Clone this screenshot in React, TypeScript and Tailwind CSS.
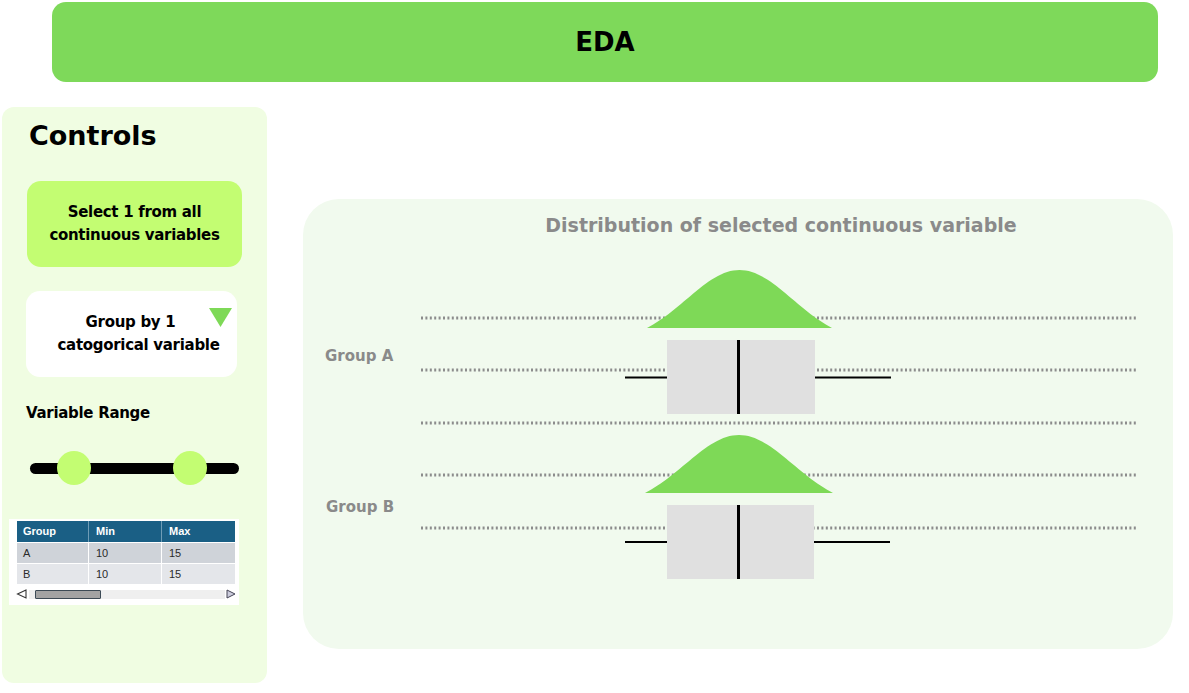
import React from "react";

function densityPath(cx: number, hw: number, base: number, peak: number, k = 1.75) {
  const h = base - peak;
  const gEdge = Math.exp(-(k * k) / 2);
  const pts: string[] = [];
  const n = 60;
  for (let i = 0; i <= n; i++) {
    const t = -1 + (2 * i) / n;
    const g = Math.exp(-((t * k) ** 2) / 2);
    const v = (g - gEdge) / (1 - gEdge);
    pts.push(`${(cx + t * hw).toFixed(2)},${(base - v * h).toFixed(2)}`);
  }
  return `M${pts.join(" L")} Z`;
}

function Chart() {
  const lines = [81, 133, 186, 238, 291];
  return (
    <svg width="870" height="370" viewBox="0 0 870 370" className="block">
      {lines.map((y) => (
        <line key={y} x1={118} x2={835} y1={y} y2={y} stroke="#8c8c8c" strokeWidth={3} strokeDasharray="2 2.4" />
      ))}
      {/* Group A */}
      <path d={densityPath(436.5, 92.5, 91, 33)} fill="#7ed957" />
      <rect x={364} y={103} width={148} height={74} fill="#e0e0e0" />
      <line x1={435.5} x2={435.5} y1={103} y2={177} stroke="#000" strokeWidth={3} />
      <line x1={322} x2={364} y1={140.5} y2={140.5} stroke="#000" strokeWidth={2} />
      <line x1={512} x2={588} y1={140.5} y2={140.5} stroke="#000" strokeWidth={2} />
      <text x={22} y={124} fontSize={15} fontWeight={700} fill="#8a8a8a" fontFamily="'DejaVu Sans', sans-serif">Group A</text>
      {/* Group B */}
      <path d={densityPath(436, 94, 256, 198)} fill="#7ed957" />
      <rect x={364} y={268} width={147} height={74} fill="#e0e0e0" />
      <line x1={435.5} x2={435.5} y1={268} y2={342} stroke="#000" strokeWidth={3} />
      <line x1={322} x2={364} y1={305} y2={305} stroke="#000" strokeWidth={2} />
      <line x1={511} x2={587} y1={305} y2={305} stroke="#000" strokeWidth={2} />
      <text x={23} y={275} fontSize={15} fontWeight={700} fill="#8a8a8a" fontFamily="'DejaVu Sans', sans-serif">Group B</text>
    </svg>
  );
}

function RangeTable() {
  const rows = [
    { g: "A", min: "10", max: "15", bg: "bg-[#cfd3d9]" },
    { g: "B", min: "10", max: "15", bg: "bg-[#e4e6ea]" },
  ];
  return (
    <div className="ml-[7px] mt-[34px] w-[230px] h-[86px] bg-white pt-[2px] pl-[8px] font-['Liberation_Sans',sans-serif]">
      <div className="w-[218px] flex flex-col gap-[1px]">
        <div className="flex h-[21px] bg-[#1a5f85] text-white text-[11px] font-bold gap-[1px]">
          <div className="w-[72px] flex items-center pl-[6px] border-r border-[#6f9cb6]">Group</div>
          <div className="w-[72px] flex items-center pl-[6px] border-r border-[#6f9cb6]">Min</div>
          <div className="flex-1 flex items-center pl-[6px]">Max</div>
        </div>
        {rows.map((r) => (
          <div key={r.g} className={`flex h-[20px] text-[11px] text-[#2a2a2a] gap-[1px] ${r.bg}`}>
            <div className="w-[72px] flex items-center pl-[6px] border-r border-white">{r.g}</div>
            <div className="w-[72px] flex items-center pl-[6px] border-r border-white">{r.min}</div>
            <div className="flex-1 flex items-center pl-[6px]">{r.max}</div>
          </div>
        ))}
      </div>
      <div className="flex items-center h-[10px] mt-[5px] -ml-[1px] w-[220px]">
        <svg width="11" height="10" viewBox="0 0 11 10" className="block">
          <path d="M10 1 L1.5 5 L10 9 Z" fill="none" stroke="#333" strokeWidth="1.1" />
        </svg>
        <div className="flex-1 h-[9px] bg-[#efefef] ml-[2px] mr-[1px] flex items-center">
          <div className="ml-[6px] w-[66px] h-[9px] bg-[#a3a3a3] border border-[#3c4a55] rounded-[1px]" />
        </div>
        <svg width="10" height="10" viewBox="0 0 10 10" className="block">
          <path d="M1 1 L9 5 L1 9 Z" fill="#ccd" stroke="#445" strokeWidth="1" />
        </svg>
      </div>
    </div>
  );
}

export default function App() {
  return (
    <div className="w-[1189px] h-[693px] bg-white font-['DejaVu_Sans',sans-serif] text-black flex flex-col overflow-hidden">
      <header className="ml-[52px] mr-[31px] mt-[2px] h-[80px] rounded-[14px] bg-[#7ed95a] flex items-center justify-center">
        <h1 className="text-[26px] font-bold leading-none">EDA</h1>
      </header>

      <div className="flex mt-[25px]">
        <aside className="ml-[2px] w-[265px] h-[576px] rounded-[12px] bg-[#f0fde2] flex flex-col pt-[13px]">
          <h2 className="ml-[27px] text-[27px] leading-[32px] font-bold">Controls</h2>

          <button className="ml-[25px] mt-[29px] w-[215px] h-[86px] rounded-[14px] bg-[#c3fd72] flex items-center justify-center text-center text-[15px] leading-[23px] font-bold tracking-[-0.3px]">
            Select 1 from all
            <br />
            continuous variables
          </button>

          <div className="ml-[24px] mt-[24px] w-[211px] h-[86px] rounded-[14px] bg-white relative flex items-center justify-center pl-[14px] text-center text-[15px] leading-[23px] font-bold tracking-[-0.3px]">
            <span>
              <span className="relative left-[-8px]">Group by 1</span>
              <br />
              catogorical variable
            </span>
            <svg width="23" height="19" viewBox="0 0 23 19" className="absolute left-[183px] top-[17px]">
              <path d="M0 0 L23 0 L11.5 19 Z" fill="#7ed957" />
            </svg>
          </div>

          <div className="ml-[24px] mt-[26px] text-[15px] leading-[20px] font-bold tracking-[-0.3px]">Variable Range</div>

          <div className="ml-[28px] mt-[28px] w-[209px] h-[34px] relative flex items-center">
            <div className="w-full h-[11px] rounded-full bg-black" />
            <div className="absolute left-[27px] top-0 w-[34px] h-[34px] rounded-full bg-[#c3fd72]" />
            <div className="absolute left-[143px] top-0 w-[34px] h-[34px] rounded-full bg-[#c3fd72]" />
          </div>

          <RangeTable />
        </aside>

        <section className="ml-[36px] mt-[92px] w-[870px] h-[450px] rounded-[36px] bg-[#f1faee] flex flex-col">
          <h3 className="pt-[14px] text-center text-[19px] leading-[24px] font-bold text-[#8a8a8a] pl-[86px]">
            Distribution of selected continuous variable
          </h3>
          <Chart />
        </section>
      </div>
    </div>
  );
}
